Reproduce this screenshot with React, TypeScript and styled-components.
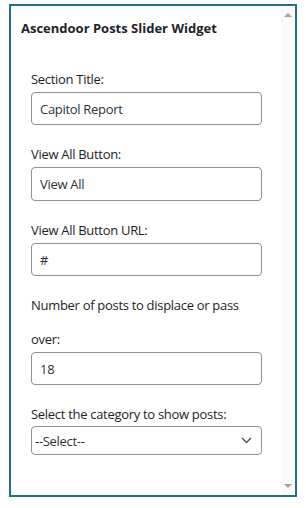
import { ReactElement } from 'react';
import styled, { createGlobalStyle } from 'styled-components';

const GlobalStyle = createGlobalStyle`
  html, body {
    margin: 0;
    padding: 0;
    background: #ffffff;
  }
  body {
    font-family: "Open Sans", "Noto Sans", sans-serif;
    color: #1e1e1e;
  }
`;

const Page = styled.div`
  padding: 4px 0 0 9px;
`;

const Frame = styled.div`
  display: flex;
  width: 288px;
  height: 493px;
  box-sizing: border-box;
  border: 2px solid #22708a;
  background: #ffffff;
`;

const Content = styled.div`
  flex: 1;
  padding: 13px 0 0 10px;
`;

const Title = styled.h3`
  margin: 0 0 25px;
  font-size: 13px;
  line-height: 18px;
  font-weight: 700;
  color: #1d2327;
`;

const Form = styled.div`
  display: flex;
  flex-direction: column;
  gap: 12px;
  padding-left: 10px;
  width: 231px;
`;

const Field = styled.div`
  display: flex;
  flex-direction: column;
`;

const Label = styled.label`
  font-size: 13px;
  line-height: 34px;
  letter-spacing: -0.3px;
  color: #1e1e1e;
`;

const Input = styled.input`
  box-sizing: border-box;
  width: 231px;
  height: ${(p: { $h?: number }) => p.$h ?? 33}px;
  margin-top: -4px;
  padding: 0 8px;
  border: 1px solid #8c8f94;
  border-radius: 4px;
  font-family: inherit;
  font-size: 13px;
  letter-spacing: -0.3px;
  color: #2c3338;
  background: #ffffff;
  outline: none;
`;

const SelectWrap = styled.div`
  position: relative;
  width: 231px;
  margin-top: -5px;
`;

const Select = styled.select`
  box-sizing: border-box;
  width: 231px;
  height: 29px;
  padding: 0 24px 0 3px;
  border: 1px solid #8c8f94;
  border-radius: 4px;
  font-family: inherit;
  font-size: 13px;
  letter-spacing: -0.3px;
  color: #2c3338;
  background: #ffffff;
  appearance: none;
  outline: none;
`;

const Chevron = styled.svg`
  position: absolute;
  right: 10px;
  top: 11px;
  pointer-events: none;
`;

const Scrollbar = styled.div`
  display: flex;
  flex-direction: column;
  justify-content: space-between;
  align-items: center;
  width: 14px;
  padding: 7px 0;
  background: #fafafa;
`;

const Arrow = styled.div<{ $down?: boolean }>`
  width: 0;
  height: 0;
  border-left: 4px solid transparent;
  border-right: 4px solid transparent;
  ${(p) =>
    p.$down
      ? 'border-top: 4px solid #a3a3a3;'
      : 'border-bottom: 4px solid #a3a3a3;'}
`;

const App = (): ReactElement => {
  return (
    <Page>
      <GlobalStyle />
      <Frame>
        <Content>
          <Title>Ascendoor Posts Slider Widget</Title>
          <Form>
            <Field>
              <Label htmlFor="section_title">Section Title:</Label>
              <Input id="section_title" defaultValue="Capitol Report" />
            </Field>
            <Field>
              <Label htmlFor="view_all">View All Button:</Label>
              <Input id="view_all" $h={34} defaultValue="View All" />
            </Field>
            <Field>
              <Label htmlFor="view_all_url">View All Button URL:</Label>
              <Input id="view_all_url" defaultValue="#" />
            </Field>
            <Field>
              <Label htmlFor="offset">Number of posts to displace or pass over:</Label>
              <Input id="offset" type="number" defaultValue="18" />
            </Field>
            <Field>
              <Label htmlFor="category">Select the category to show posts:</Label>
              <SelectWrap>
                <Select id="category" defaultValue="">
                  <option value="">--Select--</option>
                </Select>
                <Chevron width="11" height="7" viewBox="0 0 11 7">
                  <path d="M1 1 L5.5 5.5 L10 1" fill="none" stroke="#50575e" strokeWidth="1.5" />
                </Chevron>
              </SelectWrap>
            </Field>
          </Form>
        </Content>
        <Scrollbar>
          <Arrow />
          <Arrow $down />
        </Scrollbar>
      </Frame>
    </Page>
  );
};

export default App;
